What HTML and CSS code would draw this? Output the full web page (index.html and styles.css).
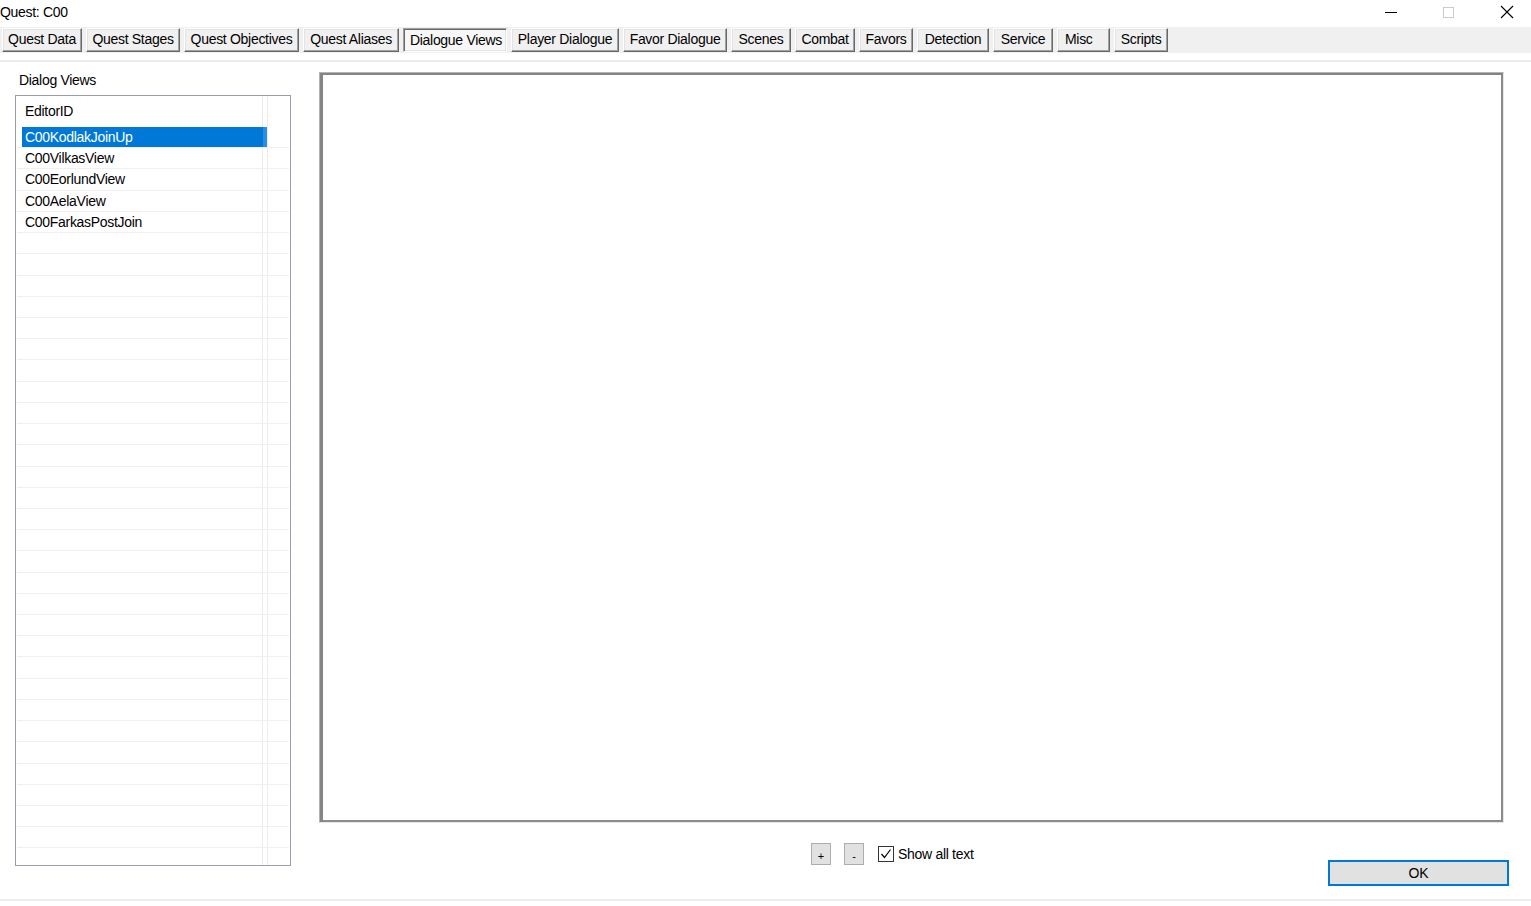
FILE: index.html
```html
<!DOCTYPE html>
<html lang="en">

<head>
    <meta charset="UTF-8">
    <meta name="viewport" content="width=device-width, initial-scale=1.0">
    <title>Quest: C00</title>
    <link rel="stylesheet" href="styles.css">
</head>

<body>
    <div class="titlebar">
        <div class="title">Quest: C00</div>
        <div class="caption-buttons">
            <svg class="cap" viewBox="0 0 14 14"><line x1="1" y1="7.5" x2="13" y2="7.5" stroke="#000" stroke-width="1" /></svg>
            <svg class="cap" viewBox="0 0 14 14"><rect x="1.5" y="2.5" width="10" height="10" fill="none" stroke="#cccccc" stroke-width="1" /></svg>
            <svg class="cap" viewBox="0 0 14 14"><path d="M1 1 L13 13 M13 1 L1 13" stroke="#000" stroke-width="1.1" /></svg>
        </div>
    </div>

    <div class="tabs">
        <div class="tab t-data">Quest Data</div>
        <div class="tab t-stages">Quest Stages</div>
        <div class="tab t-objectives">Quest Objectives</div>
        <div class="tab t-aliases">Quest Aliases</div>
        <div class="tab t-views active">Dialogue Views</div>
        <div class="tab t-player">Player Dialogue</div>
        <div class="tab t-favor">Favor Dialogue</div>
        <div class="tab t-scenes">Scenes</div>
        <div class="tab t-combat">Combat</div>
        <div class="tab t-favors">Favors</div>
        <div class="tab t-detection">Detection</div>
        <div class="tab t-service">Service</div>
        <div class="tab t-misc">Misc</div>
        <div class="tab t-scripts">Scripts</div>
    </div>
    <div class="rule"></div>

    <div class="main">
        <div class="left">
            <div class="group-label">Dialog Views</div>
            <div class="listbox">
                <div class="list-header"><span class="col-name">EditorID</span></div>
                <div class="row selected"><span class="col-name">C00KodlakJoinUp</span></div>
                <div class="row"><span class="col-name">C00VilkasView</span></div>
                <div class="row"><span class="col-name">C00EorlundView</span></div>
                <div class="row"><span class="col-name">C00AelaView</span></div>
                <div class="row"><span class="col-name">C00FarkasPostJoin</span></div>
                <div class="row"></div><div class="row"></div><div class="row"></div><div class="row"></div><div class="row"></div>
                <div class="row"></div><div class="row"></div><div class="row"></div><div class="row"></div><div class="row"></div>
                <div class="row"></div><div class="row"></div><div class="row"></div><div class="row"></div><div class="row"></div>
                <div class="row"></div><div class="row"></div><div class="row"></div><div class="row"></div><div class="row"></div>
                <div class="row"></div><div class="row"></div><div class="row"></div><div class="row"></div><div class="row"></div>
                <div class="row"></div><div class="row"></div><div class="row"></div><div class="row"></div><div class="row"></div>
            </div>
        </div>

        <div class="right">
            <div class="canvas"></div>
            <div class="footer">
                <div class="zoom-controls">
                    <button class="small-btn">+</button>
                    <button class="small-btn">-</button>
                    <label class="check">
                        <span class="checkbox">
                            <svg viewBox="0 0 14 14"><path d="M2.5 7 L5.5 10.5 L11.5 2.5" fill="none" stroke="#000" stroke-width="1.2" /></svg>
                        </span>
                        Show all text
                    </label>
                </div>
                <button class="ok-btn">OK</button>
            </div>
        </div>
    </div>
    <div class="bottom-rule"></div>
</body>

</html>
```

FILE: styles.css
```css
* {
    margin: 0;
    padding: 0;
    box-sizing: border-box;
}

body {
    font-family: 'Liberation Sans', Arial, sans-serif;
    font-size: 14px;
    letter-spacing: -0.3px;
    color: #000;
    background: #fff;
    width: 1531px;
    height: 906px;
    overflow: hidden;
}

/* title bar */
.titlebar {
    height: 24px;
    display: flex;
    align-items: center;
    justify-content: space-between;
}

.title {
    line-height: 22px;
}

.caption-buttons {
    display: flex;
    gap: 44px;
    padding-right: 17px;
    align-items: center;
}

.cap {
    width: 14px;
    height: 14px;
    display: block;
}

/* tab buttons */
.tabs {
    margin-top: 3px;
    height: 26px;
    background: #f0f0f0;
    display: flex;
    align-items: center;
    gap: 4px;
    padding-left: 2px;
}

.tab {
    height: 24px;
    line-height: 21px;
    text-align: center;
    background: #f0f0f0;
    border: 1px solid;
    border-color: #fff #696969 #696969 #fff;
    box-shadow: inset -1px -1px 0 #a0a0a0, inset 1px 1px 0 #e3e3e3;
    white-space: nowrap;
}

.tab.active {
    border-color: #a0a0a0 #fff #fff #a0a0a0;
    box-shadow: inset 1px 1px 0 #696969, inset -1px -1px 0 #e3e3e3;
    background: #f7f7f7;
    padding-left: 2px;
    line-height: 23px;
}

.t-data { width: 80px; }
.t-stages { width: 94px; }
.t-objectives { width: 115px; }
.t-aliases { width: 96px; }
.t-views { width: 104px; }
.t-player { width: 108px; }
.t-favor { width: 104px; }
.t-scenes { width: 60px; }
.t-combat { width: 60px; }
.t-favors { width: 54px; }
.t-detection { width: 72px; }
.t-service { width: 60px; }
.t-misc { width: 53px; text-align: left; padding-left: 7px; }
.t-scripts { width: 54px; }

.rule {
    margin-top: 7px;
    border-top: 2px solid #ededed;
}

/* main area */
.main {
    display: flex;
    padding-left: 15px;
}

.left {
    width: 276px;
}

.group-label {
    margin-top: 10px;
    padding-left: 4px;
    line-height: 16px;
}

.listbox {
    margin-top: 7px;
    height: 771px;
    border: 1px solid #9a9ea6;
    overflow: hidden;
    background-image:
        linear-gradient(#ececec, #ececec),
        linear-gradient(#ececec, #ececec);
    background-size: 1px 100%, 1px 100%;
    background-position: 246px 0, 251px 0;
    background-repeat: no-repeat;
}

.list-header {
    height: 31px;
    padding-left: 9px;
    line-height: 30px;
}

.row {
    height: 21.23px;
    margin: 0 1px;
    border-bottom: 1px solid #f0f0f0;
    padding-left: 5px;
    display: flex;
}

.row .col-name {
    display: block;
    width: 245px;
    height: 20px;
    line-height: 21px;
    padding-left: 3px;
}

.row.selected .col-name {
    background: #0078d7;
    color: #fff;
    box-shadow: inset -4px 0 0 #2a8fe0;
}

.right {
    margin-left: 28px;
    margin-top: 10px;
    width: 1190px;
}

.canvas {
    width: 1185px;
    height: 751px;
    border: 1px solid #b4b4b4;
    border-right-color: #e6e6e6;
    border-bottom-color: #e6e6e6;
    box-shadow: inset 3px 2px 0 #858585, inset -2px -2px 0 #8c8c8c;
}

.footer {
    margin-top: 20px;
    height: 43px;
    display: flex;
}

.zoom-controls {
    margin-left: 492px;
    display: flex;
    align-items: center;
    height: 22px;
}

.small-btn {
    width: 20px;
    height: 22px;
    background: #e1e1e1;
    border: 1px solid #adadad;
    font-family: 'Liberation Sans', Arial, sans-serif;
    font-size: 11px;
    line-height: 20px;
    color: #000;
    margin-right: 13px;
    padding-top: 2px;
}

.small-btn + .small-btn {
    margin-right: 14px;
}

.check {
    display: flex;
    align-items: center;
    gap: 4px;
}

.checkbox {
    width: 16px;
    height: 16px;
    border: 1px solid #333;
    background: #fff;
    display: block;
}

.checkbox svg {
    display: block;
    width: 14px;
    height: 14px;
}

.ok-btn {
    margin-left: auto;
    align-self: flex-end;
    width: 181px;
    height: 26px;
    background: #e1e1e1;
    border: 2px solid #0078d7;
    font-family: 'Liberation Sans', Arial, sans-serif;
    font-size: 14px;
    color: #000;
}

.bottom-rule {
    margin-top: 13px;
    border-top: 2px solid #ededed;
}
```
